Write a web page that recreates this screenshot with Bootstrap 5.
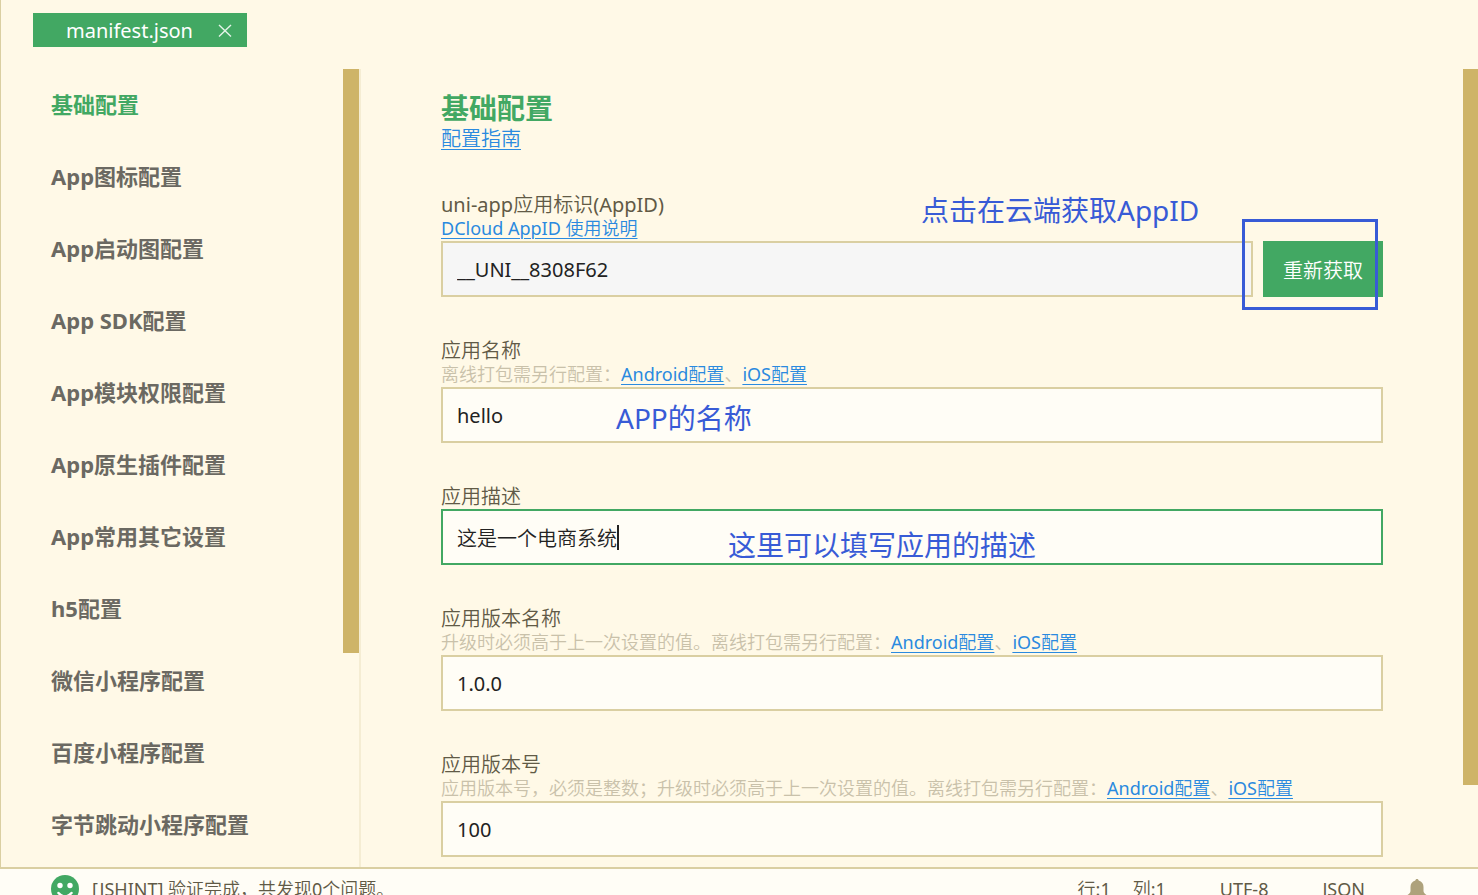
<!DOCTYPE html>
<html lang="zh-CN">
<head>
<meta charset="utf-8">
<meta name="viewport" content="width=device-width, initial-scale=1">
<title>manifest.json</title>
<link href="https://cdn.jsdelivr.net/npm/bootstrap@5.3.0/dist/css/bootstrap.min.css" rel="stylesheet">
<style>
  :root { --paper: #fff9e7; --field: #fffdf6; --line: #dacfa2; --green: #42a863; --thumb: #ceb468; --note: #385bd6; }
  body { background: var(--paper); color: #615a46; font-family: "Noto Sans", "Noto Sans CJK SC DemiLight", "Noto Sans CJK SC Light", "Noto Sans CJK SC", sans-serif; font-size: 20px; line-height: 24px; }
  .edge { border-left: 1px solid var(--line); }
  .tab-strip { height: 69px; padding: 13px 32px 0; }
  .file-tab { height: 34px; padding: 2px 15px 0 33px; gap: 25px; background: var(--green); color: #fff; font-size: 20px; }
  .tab-close { width: 14px; height: 14px; }
  .sidebar { width: 360px; border-right: 2px solid #f5edd3; }
  .side-item, .page-title, .note { font-family: "Noto Sans", "Noto Sans CJK SC", sans-serif; }
  .side-item { height: 72px; padding: 0 0 2px 50px; font-size: 22px; font-weight: 700; color: #6b6962; text-decoration: none; white-space: nowrap; }
  .side-item.active { color: var(--green); }
  .scroll-rail { width: 16px; }
  .rail-main { width: 15px; }
  .scroll-thumb { background: var(--thumb); }
  .form-pane { padding: 23px 80px 0; }
  .page-title { font-size: 28px; line-height: 32px; font-weight: 700; color: var(--green); margin-bottom: 3px; }
  .form-stack { gap: 42px; }
  .doc-link { color: #2a8adf; text-decoration-thickness: 1px; text-underline-offset: 3px; }
  .hint { font-size: 18px; line-height: 22px; padding-bottom: 2px; color: #c9c1aa; white-space: nowrap; }
  .field-box { height: 56px; padding: 0 14px; border: 2px solid var(--line); border-radius: 0; background: var(--field); color: #222; font-size: 20px; }
  .field-box:focus { background: var(--field); color: #222; box-shadow: none; border-color: var(--green); }
  .field-box:disabled { background: #f6f6f6; color: #222; opacity: 1; }
  .field-box.current { border-color: var(--green); }
  .fetch-row { gap: 10px; }
  .fetch-btn { width: 120px; border: 0; border-radius: 0; background: var(--green); color: #fff; font-size: 20px; padding: 3px 0 0; }
  .fetch-btn:hover { background: var(--green); color: #fff; }
  .note { position: absolute; color: var(--note); font-size: 28px; line-height: 36px; white-space: nowrap; pointer-events: none; }
  .note-id { left: 480px; top: -1px; }
  .note-name { left: 175px; top: 61px; }
  .note-desc { left: 287px; top: 42px; }
  .note-frame { position: absolute; right: 5px; top: 26px; width: 136px; height: 91px; border: 3px solid var(--note); pointer-events: none; }
  .text-caret { position: absolute; left: 176px; top: 40px; width: 2px; height: 25px; background: #222; }
  .status-bar { height: 28px; border-top: 2px solid var(--line); background: var(--field); font-size: 18px; padding: 0 51px; }
  .status-row { height: 40px; }
  .status-left { gap: 13px; }
  .status-pos { gap: 22px; }
  .status-right { gap: 54px; }
  .status-mode { gap: 42px; }
</style>
</head>
<body>
<div class="vh-100 d-flex flex-column overflow-hidden">
  <header class="edge tab-strip flex-shrink-0 d-flex align-items-start">
    <div class="file-tab d-flex align-items-center">
      <span>manifest.json</span>
      <button type="button" class="btn p-0 border-0 d-flex text-white" aria-label="关闭">
        <svg class="tab-close" viewBox="0 0 14 14" fill="none" stroke="#e6f4ea" stroke-width="1.4"><path d="M1 1 13 12.500M13 1 1 12.500"/></svg>
      </button>
    </div>
  </header>

  <div class="edge flex-grow-1 d-flex overflow-hidden">
    <aside class="sidebar flex-shrink-0 d-flex">
      <nav class="flex-grow-1 d-flex flex-column">
        <a href="#" class="side-item active d-flex align-items-center">基础配置</a>
        <a href="#" class="side-item d-flex align-items-center">App图标配置</a>
        <a href="#" class="side-item d-flex align-items-center">App启动图配置</a>
        <a href="#" class="side-item d-flex align-items-center">App SDK配置</a>
        <a href="#" class="side-item d-flex align-items-center">App模块权限配置</a>
        <a href="#" class="side-item d-flex align-items-center">App原生插件配置</a>
        <a href="#" class="side-item d-flex align-items-center">App常用其它设置</a>
        <a href="#" class="side-item d-flex align-items-center">h5配置</a>
        <a href="#" class="side-item d-flex align-items-center">微信小程序配置</a>
        <a href="#" class="side-item d-flex align-items-center">百度小程序配置</a>
        <a href="#" class="side-item d-flex align-items-center">字节跳动小程序配置</a>
      </nav>
      <div class="scroll-rail"><div class="scroll-thumb" style="height:73.2%"></div></div>
    </aside>

    <main class="form-pane flex-grow-1">
      <form class="form-stack d-flex flex-column">
        <div>
          <h1 class="page-title">基础配置</h1>
          <a href="#" class="doc-link d-block">配置指南</a>
        </div>

        <div class="position-relative">
          <label for="appid" class="d-block">uni-app应用标识(AppID)</label>
          <div class="hint"><a href="#" class="doc-link">DCloud AppID 使用说明</a></div>
          <div class="fetch-row d-flex">
            <input id="appid" type="text" class="form-control field-box" value="__UNI__8308F62" disabled>
            <button type="button" class="btn fetch-btn flex-shrink-0">重新获取</button>
          </div>
          <span class="note note-id">点击在云端获取AppID</span>
          <span class="note-frame"></span>
        </div>

        <div class="position-relative">
          <label for="appname" class="d-block">应用名称</label>
          <div class="hint">离线打包需另行配置：<a href="#" class="doc-link">Android配置</a>、<a href="#" class="doc-link">iOS配置</a></div>
          <input id="appname" type="text" class="form-control field-box" value="hello">
          <span class="note note-name">APP的名称</span>
        </div>

        <div class="position-relative">
          <label for="appdesc" class="d-block">应用描述</label>
          <input id="appdesc" type="text" class="form-control field-box current" value="这是一个电商系统">
          <span class="text-caret"></span>
          <span class="note note-desc">这里可以填写应用的描述</span>
        </div>

        <div>
          <label for="vername" class="d-block">应用版本名称</label>
          <div class="hint">升级时必须高于上一次设置的值。离线打包需另行配置：<a href="#" class="doc-link">Android配置</a>、<a href="#" class="doc-link">iOS配置</a></div>
          <input id="vername" type="text" class="form-control field-box" value="1.0.0">
        </div>

        <div>
          <label for="vercode" class="d-block">应用版本号</label>
          <div class="hint">应用版本号，必须是整数；升级时必须高于上一次设置的值。离线打包需另行配置：<a href="#" class="doc-link">Android配置</a>、<a href="#" class="doc-link">iOS配置</a></div>
          <input id="vercode" type="text" class="form-control field-box" value="100">
        </div>
      </form>
    </main>
    <div class="rail-main flex-shrink-0"><div class="scroll-thumb" style="height:89.7%"></div></div>
  </div>

  <footer class="status-bar flex-shrink-0 overflow-hidden">
    <div class="status-row d-flex align-items-center justify-content-between">
      <div class="status-left d-flex align-items-center">
        <svg width="28" height="28" viewBox="0 0 28 28"><circle cx="14" cy="14" r="14" fill="#42a863"/><circle cx="9" cy="10.500" r="2.700" fill="#fff"/><circle cx="19" cy="10.500" r="2.700" fill="#fff"/><path d="M7.500 18q6.500 7 13 0" fill="none" stroke="#fff" stroke-width="2.500" stroke-linecap="round"/></svg>
        <span>[JSHINT] 验证完成，共发现0个问题。</span>
      </div>
      <div class="status-right d-flex align-items-center">
        <div class="status-pos d-flex"><span>行:1</span><span>列:1</span></div>
        <span>UTF-8</span>
        <div class="status-mode d-flex align-items-center">
          <span>JSON</span>
          <svg width="20" height="20" viewBox="0 0 20 20" fill="#aea27c"><path d="M10 0c1 0 1.500.600 1.700 1.500C15 2.300 16.500 5 16.500 8v4c0 1.500 1 2.500 3 4H.500c2-1.500 3-2.500 3-4V8c0-3 1.500-5.700 4.800-6.500C8.500.600 9 0 10 0zM7 17h6c0 4-6 4-6 0z"/></svg>
        </div>
      </div>
    </div>
  </footer>
</div>
<script src="https://cdn.jsdelivr.net/npm/bootstrap@5.3.0/dist/js/bootstrap.bundle.min.js"></script>
</body>
</html>
